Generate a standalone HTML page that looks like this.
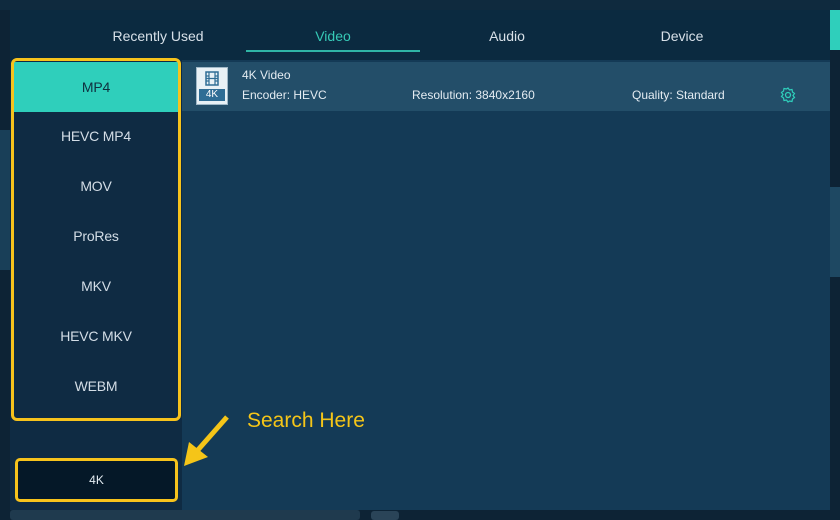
<!DOCTYPE html>
<html><head><style>
*{margin:0;padding:0;box-sizing:border-box}
body{width:840px;height:520px;overflow:hidden;background:#0d2335;font-family:"Liberation Sans","DejaVu Sans",sans-serif;position:relative}
.abs{position:absolute}
.tab{position:absolute;top:28px;font-size:14px;color:#d7e0e8;text-align:center}
.item{position:absolute;left:14px;width:164px;height:50px;line-height:50px;text-align:center;color:#d3dde6;font-size:14px;letter-spacing:-0.2px}
</style></head><body>
<div class="abs" style="left:0;top:0;width:840px;height:10px;background:#0f2a3e"></div>
<div class="abs" style="left:0;top:130px;width:10px;height:140px;background:#193f58"></div>
<div class="abs" style="left:830px;top:10px;width:10px;height:40px;background:#2fcfbb"></div>
<div class="abs" style="left:830px;top:187px;width:10px;height:90px;background:#1e4862"></div>
<div class="abs" style="left:10px;top:10px;width:820px;height:50px;background:#0b2a40"></div>
<div class="tab" style="left:98px;width:120px">Recently Used</div>
<div class="tab" style="left:246px;width:174px;color:#36c9b6">Video</div>
<div class="abs" style="left:246px;top:50px;width:174px;height:2px;background:#2fb5a6"></div>
<div class="tab" style="left:447px;width:120px">Audio</div>
<div class="tab" style="left:622px;width:120px">Device</div>
<div class="abs" style="left:10px;top:60px;width:172px;height:450px;background:#0f2b43"></div>
<div class="abs" style="left:182px;top:60px;width:648px;height:450px;background:#143a56"></div>
<div class="abs" style="left:182px;top:62px;width:648px;height:49px;background:#234e69"></div>
<div class="abs" style="left:196px;top:67px;width:32px;height:38px;background:#e8f1f6;border:1px solid #9fb8c8"></div>
<svg class="abs" style="left:203px;top:70px" width="18" height="18" viewBox="0 0 18 18"><rect x="3" y="2" width="12" height="13" fill="none" stroke="#2f6d95" stroke-width="1.5"/><path d="M6 2v13M12 2v13M3 8.5h12M3 6h3M12 6h3M3 11h3M12 11h3" stroke="#2f6d95" stroke-width="1.2"/></svg>
<div class="abs" style="left:199px;top:89px;width:26px;height:12px;background:#2f6d95;color:#fff;font-size:10px;line-height:12px;text-align:center">4K</div>
<div class="abs" style="left:242px;top:68px;color:#e4ecf2;font-size:12px">4K Video</div>
<div class="abs" style="left:242px;top:88px;color:#e4ecf2;font-size:12px">Encoder: HEVC</div>
<div class="abs" style="left:412px;top:88px;color:#e4ecf2;font-size:12px">Resolution: 3840x2160</div>
<div class="abs" style="left:632px;top:88px;color:#e4ecf2;font-size:12px">Quality: Standard</div>
<svg class="abs" style="left:779px;top:86px" width="18" height="18" viewBox="0 0 18 18"><circle cx="9" cy="9" r="2.5" fill="none" stroke="#2fcfbb" stroke-width="1.3"/><path d="M9 2l1.5 2 2.5-.5.5 2.5 2 1.5-1.5 2 1.5 2-2 1.5-.5 2.5-2.5-.5L9 16l-1.5-2-2.5.5-.5-2.5-2-1.5 1.5-2-1.5-2 2-1.5.5-2.5 2.5.5z" fill="none" stroke="#2fcfbb" stroke-width="1.2"/></svg>
<div class="item" style="top:62px;background:#2fcfbb;color:#10303f">MP4</div>
<div class="item" style="top:111px">HEVC MP4</div>
<div class="item" style="top:161px">MOV</div>
<div class="item" style="top:211px">ProRes</div>
<div class="item" style="top:261px">MKV</div>
<div class="item" style="top:311px">HEVC MKV</div>
<div class="item" style="top:361px">WEBM</div>
<div class="abs" style="left:11px;top:58px;width:170px;height:363px;border:3px solid #f7c31c;border-radius:6px"></div>
<div class="abs" style="left:15px;top:458px;width:163px;height:44px;border:3px solid #f7c31c;border-radius:5px;background:#051828;color:#e4ecf2;font-size:12px;line-height:38px;text-align:center">4K</div>
<div class="abs" style="left:247px;top:409px;color:#f5c518;font-size:21px">Search Here</div>
<svg class="abs" style="left:180px;top:413px" width="52" height="57" viewBox="0 0 52 57"><path d="M47 4L17 38" stroke="#f5c518" stroke-width="5"/><path d="M4 53L9 29L28 44Z" fill="#f5c518"/></svg>
<div class="abs" style="left:10px;top:510px;width:350px;height:10px;background:#1f3a4e;border-radius:3px"></div>
<div class="abs" style="left:371px;top:511px;width:28px;height:9px;background:#2a4458;border-radius:3px"></div>
</body></html>
